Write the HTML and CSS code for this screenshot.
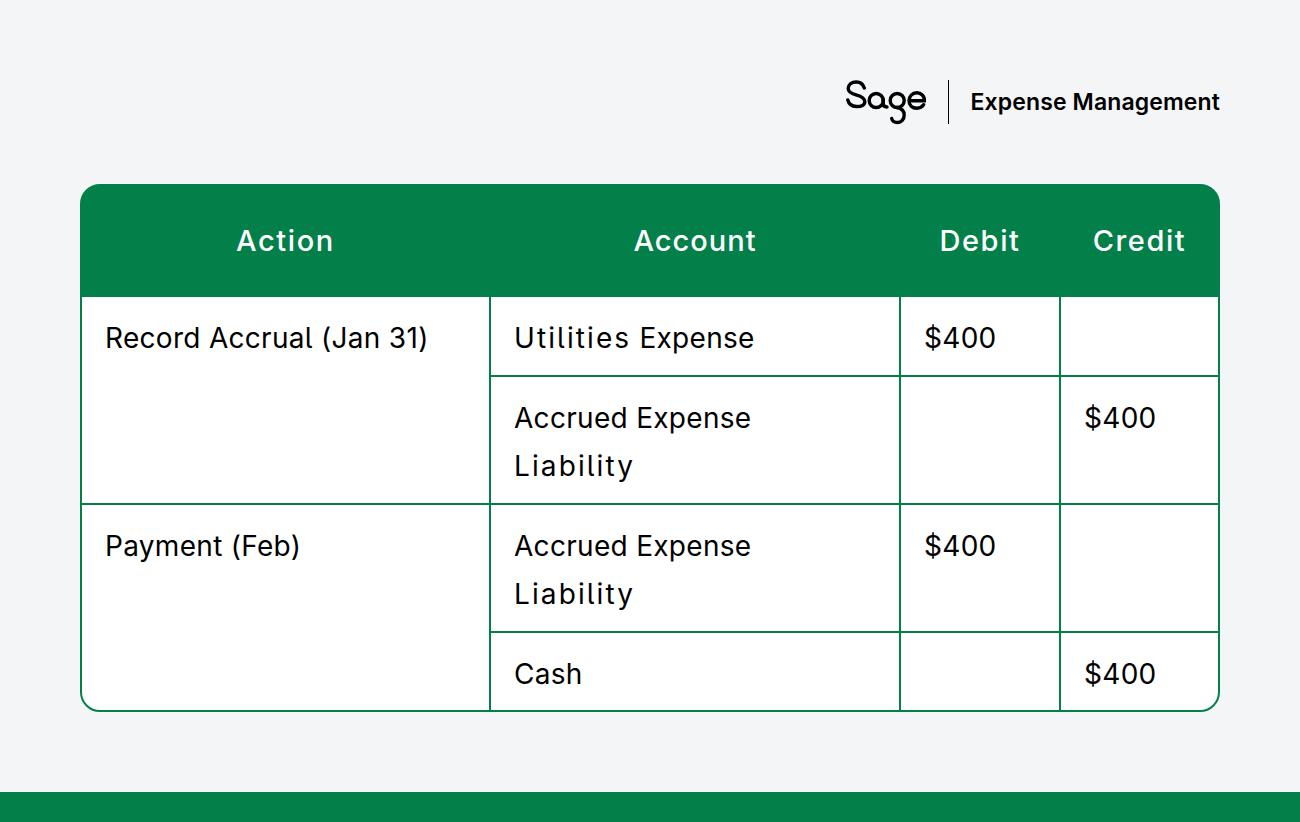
FILE: index.html
```html
<!DOCTYPE html>
<html lang="en">
<head>
<meta charset="utf-8">
<title>Accrual journal entries</title>
<link rel="stylesheet" href="styles.css">
</head>
<body>
<main class="page">
  <header class="brand">
    <svg class="logo" viewBox="0 0 80 46" width="80" height="46" aria-label="Sage" role="img">
      <g fill="none" stroke="#000" stroke-width="3.400" stroke-linecap="round">
        <path d="M18.300 8C17 3.800 14 2 10.300 2 5.500 2 2.200 4.800 2.200 8.500c0 3.500 2.800 5 7.800 6.400 5.500 1.500 8.800 3.300 8.800 6.800 0 3.500-3.500 5-8.500 4.800C6 26.300 2.800 24 1.800 20"/>
        <circle cx="30.200" cy="20.500" r="7"/>
        <path d="M37.200 19v4.500c0 2.300 1.200 3.500 3.800 3.500"/>
        <circle cx="51.200" cy="20.500" r="7"/>
        <path d="M51.200 27.500c4.500 1 7 3.500 7 7.500 0 4.500-3 7.500-6.500 7.500-3 0-5.500-1.500-6-4"/>
        <path d="M63 20.800h15.500c0-4.700-3.300-8-7.700-8-4.500 0-7.800 3.500-7.800 8 0 4.400 3.300 7.400 7.800 7.400 3 0 5.400-1.200 6.800-3.500"/>
      </g>
    </svg>
    <span class="divider"></span>
    <span class="product">Expense Management</span>
  </header>
  <section class="sheet">
    <div class="cell head">Action</div>
    <div class="cell head tight">Account</div>
    <div class="cell head">Debit</div>
    <div class="cell head last">Credit</div>

    <div class="cell body span-a">Record Accrual (Jan 31)</div>
    <div class="cell body"><span class="wide">Utilities</span> Expense</div>
    <div class="cell body">$400</div>
    <div class="cell body last"></div>
    <div class="cell body">Accrued Expense<br><span class="wide">Liability</span></div>
    <div class="cell body"></div>
    <div class="cell body last">$400</div>

    <div class="cell body span-b">Payment (Feb)</div>
    <div class="cell body">Accrued Expense<br><span class="wide">Liability</span></div>
    <div class="cell body">$400</div>
    <div class="cell body last"></div>
    <div class="cell body end">Cash</div>
    <div class="cell body end"></div>
    <div class="cell body end last">$400</div>
  </section>
</main>
<footer class="band"></footer>
</body>
</html>
```
FILE: styles.css
```css
* { box-sizing: border-box; }
html, body { margin: 0; height: 100%; }
body {
  background: #f3f5f7;
  font-family: "Inter", "Noto Sans", sans-serif;
  font-feature-settings: "cv05";
  color: #000;
  display: flex;
  flex-direction: column;
  height: 822px;
  overflow: hidden;
}
.page { flex: 1; padding: 80px 80px 0; display: flex; flex-direction: column; }
.brand { display: flex; justify-content: flex-end; align-items: center; height: 44px; margin-bottom: 60px; }
.logo { display: block; margin-top: 2px; margin-right: 22px; }
.divider { width: 1px; height: 44px; background: #000; margin-right: 22px; }
.product { font-size: 23px; font-weight: 600; letter-spacing: 0.12px; }
.sheet {
  width: 1140px;
  height: 528px;
  background: #038049;
  border: 2px solid #038049;
  border-radius: 20px;
  overflow: hidden;
  display: grid;
  grid-template-columns: 409px 410px 160px 157px;
  grid-template-rows: 111px 80px 128px 128px 77px;
}
.cell { font-size: 28px; line-height: 48px; letter-spacing: 0.3px; padding: 17px 23px 15px; background: #fff; border-right: 2px solid #038049; border-bottom: 2px solid #038049; }
.head { background: #038049; color: #fff; font-size: 29px; font-weight: 500; letter-spacing: 1.6px; display: flex; align-items: center; justify-content: center; padding: 0; }
.tight { letter-spacing: 1px; }
.wide { letter-spacing: 2.1px; }
.last { border-right: 0; }
.end { border-bottom: 0; }
.span-a { grid-row: span 2; }
.span-b { grid-row: span 2; border-bottom: 0; }
.band { height: 30px; flex: none; background: #038049; }
```
